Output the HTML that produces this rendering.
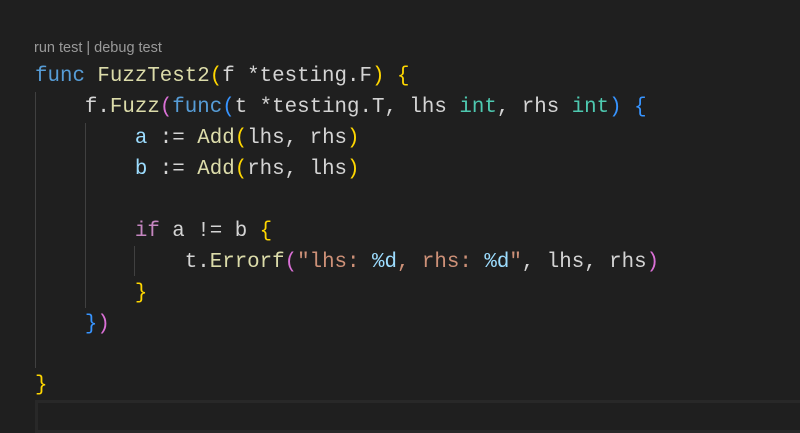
<!DOCTYPE html>
<html><head><style>
body{margin:0;width:800px;height:432px;background:#1f1f1f;overflow:hidden;position:relative;font-family:"Liberation Mono",monospace;}
.lens{position:absolute;left:34px;top:40px;font:14.5px "Liberation Sans",sans-serif;color:#9a9a9a;}
.l{position:absolute;left:35px;font-size:20.8px;line-height:31px;height:31px;white-space:pre;color:#d4d4d4;}
.k{color:#569cd6}.f{color:#dcdcaa}.y{color:#ffd700}.p{color:#da70d6}.b{color:#3794ff}.v{color:#9cdcfe}.s{color:#ce9178}.c{color:#c586c0}.t{color:#4ec9b0}
.g{position:absolute;width:1px;background:#404040;}
.cur{position:absolute;left:35px;top:400px;width:780px;height:27px;border:3px solid #282828;}
</style></head><body>
<div class="lens">run test | debug test</div>
<div class="g" style="left:35px;top:92px;height:276px"></div>
<div class="g" style="left:85px;top:123px;height:185px"></div>
<div class="g" style="left:134px;top:246px;height:30px"></div>
<div class="l" style="top:61px"><span class="k">func</span> <span class="f">FuzzTest2</span><span class="y">(</span>f *testing.F<span class="y">)</span> <span class="y">{</span></div>
<div class="l" style="top:92px">    f.<span class="f">Fuzz</span><span class="p">(</span><span class="k">func</span><span class="b">(</span>t *testing.T, lhs <span class="t">int</span>, rhs <span class="t">int</span><span class="b">)</span> <span class="b">{</span></div>
<div class="l" style="top:123px">        <span class="v">a</span> := <span class="f">Add</span><span class="y">(</span>lhs, rhs<span class="y">)</span></div>
<div class="l" style="top:154px">        <span class="v">b</span> := <span class="f">Add</span><span class="y">(</span>rhs, lhs<span class="y">)</span></div>
<div class="l" style="top:216px">        <span class="c">if</span> a != b <span class="y">{</span></div>
<div class="l" style="top:247px">            t.<span class="f">Errorf</span><span class="p">(</span><span class="s">"lhs: </span><span class="v">%d</span><span class="s">, rhs: </span><span class="v">%d</span><span class="s">"</span>, lhs, rhs<span class="p">)</span></div>
<div class="l" style="top:278px">        <span class="y">}</span></div>
<div class="l" style="top:309px">    <span class="b">}</span><span class="p">)</span></div>
<div class="l" style="top:370px"><span class="y">}</span></div>
<div class="cur"></div>
</body></html>
